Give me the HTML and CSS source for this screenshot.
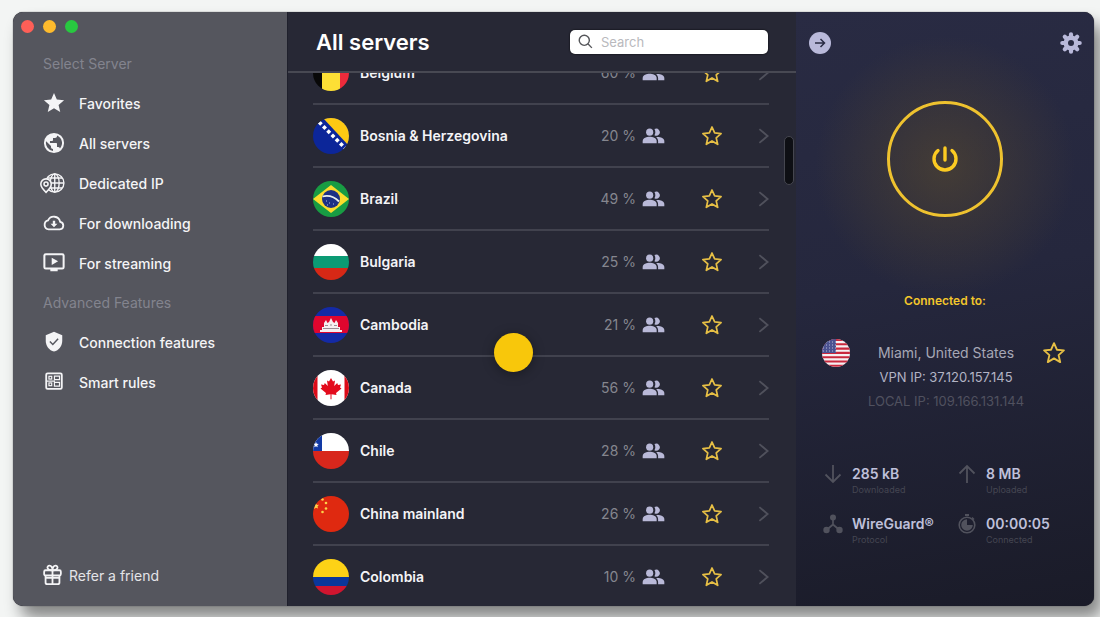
FILE: index.html
```html
<!DOCTYPE html>
<html lang="en">
<head>
<meta charset="utf-8">
<title>All servers</title>
<link rel="stylesheet" href="styles.css">
</head>
<body>
<svg class="defs" aria-hidden="true">
  <symbol id="star-line" viewBox="0 0 24 24"><path d="M12 2.200l2.900 6.500 7 .7-5.300 4.700 1.600 7-6.200-3.700-6.200 3.700 1.600-7-5.300-4.700 7-.7z" fill="none" stroke="currentColor" stroke-width="1.900" stroke-linejoin="round"/></symbol>
  <symbol id="people" viewBox="0 0 24 16"><g fill="currentColor"><circle cx="8" cy="4" r="3.700"/><path d="M.7 15.500v-2.300c0-3 4.400-4.400 7.300-4.400s7.300 1.400 7.300 4.400v2.300z"/><path d="M13 .8a3.700 3.700 0 1 1 0 6.400c1.200-1.900 1.200-4.500 0-6.400z"/><path d="M16.800 15.500v-2.300c0-1.700-.8-3-2-4 3-.7 8.500.8 8.500 4v2.300z"/></g></symbol>
  <symbol id="chevron" viewBox="0 0 12 18"><path d="M1.500 1.500l9 7.500-9 7.500" fill="none" stroke="currentColor" stroke-width="2"/></symbol>
</svg>

<div class="window">
  <aside class="sidebar">
    <div class="lights"><button class="light red" aria-label="Close"></button><button class="light amber" aria-label="Minimize"></button><button class="light green" aria-label="Zoom"></button></div>
    <nav class="nav">
      <h2 class="nav-title">Select Server</h2>
      <a class="nav-item" href="#"><svg class="nav-icon" viewBox="0 0 24 24"><path fill="currentColor" d="M12 1l3.100 7.200 7.900.7-6 5.200 1.800 7.700L12 17.700l-6.800 4.100L7 14.100 1 8.900l7.900-.7z"/></svg>Favorites</a>
      <a class="nav-item" href="#"><svg class="nav-icon" viewBox="0 0 24 24"><path fill="currentColor" d="M12 1a11 11 0 1 0 0 22 11 11 0 0 0 0-22zm-1.100 19.700A8.800 8.800 0 0 1 3.400 10l5.300 5.300v1.100c0 1.200 1 2.200 2.200 2.200zm7.600-2.800a2.200 2.200 0 0 0-2.100-1.500h-1.100v-3.300c0-.6-.5-1.100-1.100-1.100H7.600V9.800h2.200c.6 0 1.100-.5 1.100-1.100V6.500h2.200c1.200 0 2.200-1 2.200-2.200v-.4a8.800 8.800 0 0 1 3.200 14z"/></svg>All servers</a>
      <a class="nav-item" href="#"><svg class="nav-icon wide" viewBox="0 0 28 24"><g fill="none" stroke="currentColor" stroke-width="1.500"><circle cx="17" cy="12" r="10"/><ellipse cx="17" cy="12" rx="4.800" ry="10"/><path d="M17 2v20M9 6.500h16M8 12h19M9 17.500h16"/></g><path d="M7.500 7.500a5.700 5.700 0 0 0-5.700 5.700c0 3.800 5.700 9 5.700 9s5.700-5.200 5.700-9a5.700 5.700 0 0 0-5.700-5.700z" fill="#55565e" stroke="currentColor" stroke-width="1.700"/><circle cx="7.500" cy="13.200" r="2.200" fill="none" stroke="currentColor" stroke-width="1.700"/></svg>Dedicated IP</a>
      <a class="nav-item" href="#"><svg class="nav-icon" viewBox="0 0 24 24"><path d="M6.200 19A5 5 0 0 1 5.500 9.200a7 7 0 0 1 13.200 1.500A4.200 4.200 0 0 1 18.400 19z" fill="none" stroke="currentColor" stroke-width="2"/><path fill="currentColor" d="M10.700 9.500h2.600v3.200h2.500L12 16.500l-3.800-3.800h2.500z"/></svg>For downloading</a>
      <a class="nav-item" href="#"><svg class="nav-icon" viewBox="0 0 24 24"><rect x="1.500" y="2.500" width="21" height="15.500" rx="1.500" fill="none" stroke="currentColor" stroke-width="2.200"/><path fill="currentColor" d="M9.500 6.200l7 4-7 4zM8 18h8v3H8z"/></svg>For streaming</a>
      <h2 class="nav-title">Advanced Features</h2>
      <a class="nav-item" href="#"><svg class="nav-icon" viewBox="0 0 24 24"><path fill="currentColor" d="M12 .8l9 3.700v6.300c0 5.500-3.800 10.300-9 11.600-5.200-1.300-9-6.100-9-11.600V4.500z"/><path d="M7.500 11.500l3.200 3.200 5.800-6.200" fill="none" stroke="#55565e" stroke-width="1.600"/></svg>Connection features</a>
      <a class="nav-item" href="#"><svg class="nav-icon" viewBox="0 0 24 24"><rect x="3.500" y="2.500" width="17" height="17" rx="1.500" fill="none" stroke="currentColor" stroke-width="2"/><g fill="none" stroke="currentColor" stroke-width="1.300"><rect x="6.500" y="5.800" width="3" height="3"/><rect x="6.500" y="13" width="3" height="3"/><path d="M12.500 5.500h5.500v4h-5.500zM12.500 12.500h5.500v4h-5.500zM4 11h9"/></g></svg>Smart rules</a>
    </nav>
    <a class="refer" href="#"><svg class="refer-icon" viewBox="0 0 20 22"><g fill="none" stroke="currentColor" stroke-width="1.900" stroke-linejoin="round"><rect x="1.200" y="6" width="17.600" height="5.500" rx="1.500"/><path d="M2.700 11.500v7.300c0 1 .8 1.800 1.800 1.800h11c1 0 1.800-.8 1.800-1.800v-7.300M10 6v14.500M2.700 14h14.600M10 6C4 6.500 3.500 1.500 6.500 1.200 9 1 10 3.500 10 6zM10 6c6 .5 6.500-4.500 3.500-4.800C11 1 10 3.500 10 6z"/></g></svg>Refer a friend</a>
  </aside>

  <main class="main">
    <header class="header">
      <h1 class="title">All servers</h1>
      <label class="search"><svg class="search-icon" viewBox="0 0 16 16"><g fill="none" stroke="#55565a" stroke-width="1.500"><circle cx="6.700" cy="6.700" r="5.400"/><path d="M10.500 10.500l4.300 4.300"/></g></svg><input class="search-input" type="text" placeholder="Search" aria-label="Search"></label>
    </header>
    <div class="scroller">
      <ul class="list">
        <li class="row"><svg class="flag" viewBox="0 0 36 36"><path fill="#080808" d="M0 0h9v36H0z"/><path fill="#fddf35" d="M9 0h18v36H9z"/><path fill="#ed2b3b" d="M27 0h9v36h-9z"/></svg><span class="name">Belgium</span><span class="load">60 %</span><svg class="people"><use href="#people"/></svg><button class="fav" aria-label="Favorite Belgium"><svg class="star"><use href="#star-line"/></svg></button><svg class="chevron"><use href="#chevron"/></svg></li>
        <li class="row"><svg class="flag" viewBox="0 0 36 36"><path fill="#0c2699" d="M0 0h36v36H0z"/><path fill="#fdc913" d="M10 0h26v28z"/><path d="M6 4l28 28" stroke="#fff" stroke-width="3.600" stroke-dasharray="3.500 2.500"/></svg><span class="name">Bosnia &amp; Herzegovina</span><span class="load">20 %</span><svg class="people"><use href="#people"/></svg><button class="fav" aria-label="Favorite Bosnia &amp; Herzegovina"><svg class="star"><use href="#star-line"/></svg></button><svg class="chevron"><use href="#chevron"/></svg></li>
        <li class="row"><svg class="flag" viewBox="0 0 36 36"><path fill="#189c43" d="M0 0h36v36H0z"/><path fill="#fbdd2c" d="M18 4l18 14-18 14L0 18z"/><circle cx="18" cy="18" r="9" fill="#1c3185"/><path d="M9.500 15.500c6-1.500 12 .5 16.500 5" fill="none" stroke="#e8f0ee" stroke-width="1.800"/><path d="M13 20h1M16 22h1M20 23h1M14 24h1" stroke="#aebbe0"/></svg><span class="name">Brazil</span><span class="load">49 %</span><svg class="people"><use href="#people"/></svg><button class="fav" aria-label="Favorite Brazil"><svg class="star"><use href="#star-line"/></svg></button><svg class="chevron"><use href="#chevron"/></svg></li>
        <li class="row"><svg class="flag" viewBox="0 0 36 36"><path fill="#fff" d="M0 0h36v12H0z"/><path fill="#0b9b74" d="M0 12h36v12H0z"/><path fill="#d62816" d="M0 24h36v12H0z"/></svg><span class="name">Bulgaria</span><span class="load">25 %</span><svg class="people"><use href="#people"/></svg><button class="fav" aria-label="Favorite Bulgaria"><svg class="star"><use href="#star-line"/></svg></button><svg class="chevron"><use href="#chevron"/></svg></li>
        <li class="row"><svg class="flag" viewBox="0 0 36 36"><path fill="#142aa5" d="M0 0h36v36H0z"/><path fill="#e0062e" d="M0 9h36v17H0z"/><path fill="#f6eef0" d="M7 25v-2h2v-3h2v-4l2-3 1.500 3 1.500-1 2-4 2 4 1.500 1 1.500-3 2 3v4h2v3h2v2z"/><path d="M10 21.500h16M12 18.500h3M21 18.500h3M17 18h2" stroke="#9b8b94" stroke-width="1"/></svg><span class="name">Cambodia</span><span class="load">21 %</span><svg class="people"><use href="#people"/></svg><button class="fav" aria-label="Favorite Cambodia"><svg class="star"><use href="#star-line"/></svg></button><svg class="chevron"><use href="#chevron"/></svg></li>
        <li class="row"><svg class="flag" viewBox="0 0 36 36"><path fill="#fff" d="M0 0h36v36H0z"/><path fill="#dc0b18" d="M0 0h4.500v36H0zM31.500 0H36v36h-4.500z"/><path fill="#e30b1c" d="M18 8l2 3.500 2-1-.8 5.500 3-3 .8 2 3-.5-1 3 1.500 1-5.500 4.500.5 2-5-.7v5h-1v-5l-5 .7.5-2-5.500-4.500 1.500-1-1-3 3 .5.800-2 3 3-.8-5.500 2 1z"/></svg><span class="name">Canada</span><span class="load">56 %</span><svg class="people"><use href="#people"/></svg><button class="fav" aria-label="Favorite Canada"><svg class="star"><use href="#star-line"/></svg></button><svg class="chevron"><use href="#chevron"/></svg></li>
        <li class="row"><svg class="flag" viewBox="0 0 36 36"><path fill="#fff" d="M0 0h36v18H0z"/><path fill="#d8271c" d="M0 18h36v18H0z"/><path fill="#123aa5" d="M0 0h9v18H0z"/><path fill="#fff" d="M3 9l.8 1.800 2 .2-1.500 1.300.4 2L3 13.300l-1.700 1 .4-2L.2 11l2-.2z"/></svg><span class="name">Chile</span><span class="load">28 %</span><svg class="people"><use href="#people"/></svg><button class="fav" aria-label="Favorite Chile"><svg class="star"><use href="#star-line"/></svg></button><svg class="chevron"><use href="#chevron"/></svg></li>
        <li class="row"><svg class="flag" viewBox="0 0 36 36"><path fill="#df2910" d="M0 0h36v36H0z"/><g fill="#fbd34a"><path d="M2.500 6.500L4 9l2-.2-1.500 1.700.5 2-2-.8-2 1.300z"/><circle cx="9.500" cy="3.500" r="1.300"/><circle cx="13" cy="7" r="1.300"/><circle cx="13" cy="12.500" r="1.300"/><circle cx="9.500" cy="16" r="1.300"/></g></svg><span class="name">China mainland</span><span class="load">26 %</span><svg class="people"><use href="#people"/></svg><button class="fav" aria-label="Favorite China mainland"><svg class="star"><use href="#star-line"/></svg></button><svg class="chevron"><use href="#chevron"/></svg></li>
        <li class="row"><svg class="flag" viewBox="0 0 36 36"><path fill="#fdd216" d="M0 0h36v18H0z"/><path fill="#0b379a" d="M0 18h36v9H0z"/><path fill="#d0152f" d="M0 27h36v9H0z"/></svg><span class="name">Colombia</span><span class="load">10 %</span><svg class="people"><use href="#people"/></svg><button class="fav" aria-label="Favorite Colombia"><svg class="star"><use href="#star-line"/></svg></button><svg class="chevron"><use href="#chevron"/></svg></li>
      </ul>
    </div>
    <span class="thumb"></span>
    <span class="pointer"></span>
  </main>

  <section class="panel">
    <div class="panel-bar">
      <button class="icon-btn" aria-label="Collapse"><svg viewBox="0 0 22 22"><circle cx="11" cy="11" r="11" fill="#b9b9da"/><path d="M6 11h9.500M11.500 7l4 4-4 4" fill="none" stroke="#292b43" stroke-width="1.500"/></svg></button>
      <button class="icon-btn" aria-label="Settings"><svg viewBox="0 0 22 22"><g stroke="#b9b9da" stroke-width="4.200" stroke-linecap="round"><path d="M11 2.300v17.400M2.300 11h17.400M4.800 4.800l12.400 12.400M17.200 4.800L4.800 17.200"/></g><circle cx="11" cy="11" r="7.500" fill="#b9b9da"/><circle cx="11" cy="11" r="3" fill="#292b43"/></svg></button>
    </div>
    <button class="power" aria-label="Disconnect"><svg class="power-icon" viewBox="0 0 28 28"><path d="M7 5.500A11 11 0 1 0 21 5.500M14 3v12" fill="none" stroke="currentColor" stroke-width="3.400" stroke-linecap="round"/></svg></button>
    <p class="status">Connected to:</p>
    <div class="location">
      <svg class="us-flag" viewBox="0 0 28 28"><path fill="#f5f0f2" d="M0 0h28v28H0z"/><path d="M0 1h28M0 5.300h28M0 9.600h28M0 13.900h28M0 18.200h28M0 22.500h28M0 26.800h28" stroke="#c9283d" stroke-width="2.100"/><path fill="#4b5291" d="M0 0h14v14H0z"/><path d="M1 3h13M1 6h13M1 9h13M1 12h13" stroke="#b7bad8" stroke-dasharray="1 2"/></svg>
      <div class="address"><p class="city">Miami, United States</p><p class="vpn">VPN IP: 37.120.157.145</p><p class="local">LOCAL IP: 109.166.131.144</p></div>
      <button class="fav" aria-label="Favorite Miami"><svg class="star big"><use href="#star-line"/></svg></button>
    </div>
    <dl class="stats">
      <div class="stat"><svg class="stat-icon" viewBox="0 0 20 20"><path d="M10 1v17M2.500 10.500L10 18l7.500-7.500" fill="none" stroke="currentColor" stroke-width="1.800"/></svg><dt>Downloaded</dt><dd>285 kB</dd></div>
      <div class="stat"><svg class="stat-icon" viewBox="0 0 20 20"><path d="M10 19V2M2.500 9.500L10 2l7.500 7.500" fill="none" stroke="currentColor" stroke-width="1.800"/></svg><dt>Uploaded</dt><dd>8 MB</dd></div>
      <div class="stat"><svg class="stat-icon" viewBox="0 0 20 20"><g fill="currentColor"><circle cx="10" cy="3.500" r="3"/><circle cx="3.500" cy="16" r="3.200"/><circle cx="16.500" cy="16" r="3.200"/></g><path d="M10 3.500v7L3.500 16M10 10.500l6.500 5.500" fill="none" stroke="currentColor" stroke-width="1.700"/></svg><dt>Protocol</dt><dd>WireGuard®</dd></div>
      <div class="stat"><svg class="stat-icon" viewBox="0 0 20 20"><path d="M8 1h4" stroke="currentColor" stroke-width="2"/><circle cx="10" cy="11" r="7.800" fill="none" stroke="currentColor" stroke-width="1.600"/><path fill="currentColor" d="M10 5.200V11h5.800A5.800 5.800 0 1 1 10 5.200zM15.500 3l2 2-1 1-2-2z"/></svg><dt>Connected</dt><dd>00:00:05</dd></div>
    </dl>
  </section>
</div>
</body>
</html>
```
FILE: styles.css
```css
* { box-sizing: border-box; }
body, h1, h2, p, ul, dl, dd { margin: 0; padding: 0; }
body {
  display: flex;
  min-height: 100vh;
  padding: 12px 6px 11px 13px;
  background: #f3f5f4;
  font-family: Inter, "Liberation Sans", sans-serif;
  font-size: 14px;
  overflow: hidden;
}
button { border: 0; padding: 0; background: none; color: inherit; font: inherit; }
a { color: inherit; text-decoration: none; }
svg { display: block; flex: none; }
.defs { display: none; }

.window {
  display: flex;
  flex: 1;
  height: calc(100vh - 23px);
  border-radius: 10px;
  overflow: hidden;
  background: #272835;
  box-shadow: 0 0 1px #222, 8px 12px 16px rgba(0, 0, 0, .45);
}

.sidebar {
  display: flex;
  flex-direction: column;
  width: 274px;
  background: #55565e;
  color: #f4f4f6;
}
.lights { display: flex; gap: 9px; height: 32px; padding: 8px 8px 0; }
.light { width: 13px; height: 13px; border-radius: 50%; }
.red { background: #fe5f57; }
.amber { background: #febb2d; }
.green { background: #28c840; }
.nav { flex: 1; }
.nav-title {
  padding-left: 30px;
  font-size: 14px;
  font-weight: 400;
  line-height: 39px;
  color: #83848e;
}
.nav-item {
  display: flex;
  align-items: center;
  gap: 14px;
  height: 40px;
  padding-left: 30px;
  font-weight: 500;
}
.nav-icon { width: 22px; height: 22px; }
.nav-icon.wide { width: 26px; margin-left: -4px; }
.refer { display: flex; align-items: center; gap: 7px; padding: 0 30px 20px; color: #e4e4e8; }
.refer-icon { width: 19px; height: 22px; color: #f4f4f6; }

.main { position: relative; display: flex; flex: 1; flex-direction: column; min-width: 0; border-left: 1px solid #1f202c; }
.header {
  display: flex;
  align-items: center;
  justify-content: space-between;
  height: 61px;
  padding: 0 28px;
  border-bottom: 2px solid #484953;
}
.title { font-size: 22px; font-weight: 600; color: #fff; }
.search {
  display: flex;
  align-items: center;
  gap: 8px;
  width: 198px;
  height: 24px;
  padding: 0 8px;
  border-radius: 5px;
  background: #fff;
  box-shadow: 0 0 2px #000;
}
.search-icon { width: 15px; height: 15px; }
.search-input { flex: 1; min-width: 0; border: 0; outline: 0; padding: 0; background: none; font: inherit; font-size: 13px; }
.search-input::placeholder { color: #b9b9bd; }

.scroller { flex: 1; min-height: 0; overflow: hidden; }
.list { margin: -31px 27px 0 25px; list-style: none; }
.row {
  display: flex;
  align-items: center;
  height: 63px;
  border-bottom: 2px solid #41424e;
}
.flag { width: 36px; height: 36px; border-radius: 50%; }
.name { flex: 1; padding-left: 11px; font-weight: 600; color: #f4f4f7; }
.load { color: #85868f; }
.people { width: 23px; height: 16px; margin: 0 36px 0 6px; color: #b9b9d8; }
.fav { color: #e6bf45; }
.star { width: 22px; height: 22px; }
.star.big { width: 24px; height: 24px; }
.chevron { width: 11px; height: 18px; margin-left: 35px; color: #50515c; }
.thumb {
  position: absolute;
  top: 124px;
  right: 2px;
  width: 10px;
  height: 49px;
  border: 1px solid #45464f;
  border-radius: 5px;
  background: #0e0f14;
}
.pointer {
  position: absolute;
  top: 321px;
  left: 206px;
  width: 39px;
  height: 39px;
  border-radius: 50%;
  background: #f8c70b;
  box-shadow: 0 2px 12px rgba(0, 0, 0, .35);
}

.panel {
  width: 298px;
  background:
    radial-gradient(circle at 50% 26%, rgba(92, 76, 46, .55), rgba(92, 76, 46, 0) 130px),
    linear-gradient(170deg, #292b43 0%, #25273d 45%, #1a1b28 100%);
}
.panel-bar { display: flex; align-items: center; justify-content: space-between; height: 62px; padding: 0 12px 0 13px; }
.icon-btn { width: 22px; height: 22px; }
.power {
  display: flex;
  align-items: center;
  justify-content: center;
  width: 116px;
  height: 116px;
  margin: 27px auto 74px;
  border: 3px solid #eec22f;
  border-radius: 50%;
  color: #fccb22;
}
.power-icon { width: 28px; height: 28px; }
.status { font-size: 12px; font-weight: 600; line-height: 20px; text-align: center; color: #f3c62b; }
.location {
  display: grid;
  grid-template-columns: 28px 1fr 24px;
  align-items: start;
  margin-top: 30px;
  padding: 0 28px 0 26px;
  line-height: 24px;
  text-align: center;
}
.us-flag { width: 28px; height: 28px; margin-top: -2px; border-radius: 50%; }
.city { color: #a6a7b5; }
.vpn { font-size: 13px; color: #b2b3c4; }
.local { font-size: 13px; color: #50515f; }
.stats {
  display: grid;
  grid-template-columns: 134px 1fr;
  gap: 18px 0;
  margin-top: 51px;
  padding: 0 0 0 27px;
}
.stat { display: grid; grid-template: 20px 12px / 20px 1fr; column-gap: 9px; }
.stat-icon { grid-row: 1; grid-column: 1; width: 20px; height: 20px; color: #51525d; }
.stat dt { grid-row: 2; grid-column: 2; font-size: 9px; line-height: 12px; color: #454652; }
.stat dd { grid-row: 1; grid-column: 2; font-weight: 600; line-height: 20px; color: #bfc0da; }
```
